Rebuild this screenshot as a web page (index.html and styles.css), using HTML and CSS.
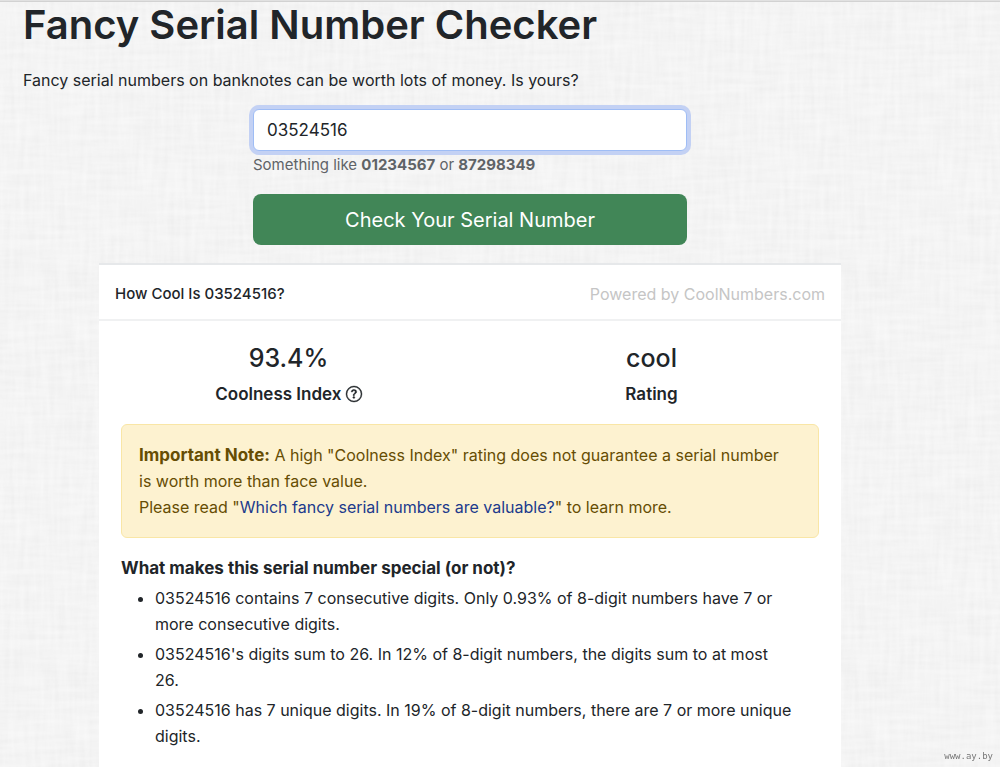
FILE: index.html
```html
<!DOCTYPE html>
<html lang="en">
  <head>
    <meta charset="utf-8">
    <meta name="viewport" content="width=device-width, initial-scale=1.0">
    <title>Fancy Serial Number Checker</title>
    <link rel="stylesheet" href="styles.css">
  </head>

  <body>
    <div class="topbar"></div>

    <main class="container">
      <h1>Fancy Serial Number Checker</h1>
      <p class="lead">Fancy serial numbers on banknotes can be worth lots of money. Is yours?</p>

      <form class="checker">
        <input class="serial" type="text" value="03524516" aria-label="Serial number" aria-describedby="serial-help">
        <div class="help" id="serial-help">Something like <b>01234567</b> or <b>87298349</b></div>
        <button class="submit" type="button">Check Your Serial Number</button>
      </form>

      <section class="card">
        <header class="card-header">
          <h2>How Cool Is 03524516?</h2>
          <a class="powered" href="#">Powered by CoolNumbers.com</a>
        </header>

        <div class="card-body">
          <div class="stats">
            <div class="stat">
              <div class="value">93.4%</div>
              <div class="label">Coolness Index
                <svg class="icon" viewBox="0 0 16 16" fill="currentColor" stroke="currentColor" stroke-width=".4" aria-hidden="true">
                  <path d="M8 15A7 7 0 1 1 8 1a7 7 0 0 1 0 14m0 1A8 8 0 1 0 8 0a8 8 0 0 0 0 16"/>
                  <path d="M5.255 5.786a.237.237 0 0 0 .241.247h.825c.138 0 .248-.113.266-.25.09-.656.54-1.134 1.342-1.134.686 0 1.314.343 1.314 1.168 0 .635-.374.927-.965 1.371-.673.489-1.206 1.06-1.168 1.987l.003.217a.25.25 0 0 0 .25.246h.811a.25.25 0 0 0 .25-.25v-.105c0-.718.273-.927 1.01-1.486.609-.463 1.244-.977 1.244-2.056 0-1.511-1.276-2.241-2.673-2.241-1.267 0-2.655.59-2.75 2.286m1.557 5.763c0 .533.425.927 1.01.927.609 0 1.028-.394 1.028-.927 0-.552-.42-.94-1.029-.94-.584 0-1.009.388-1.009.94"/>
                </svg>
              </div>
            </div>
            <div class="stat">
              <div class="value">cool</div>
              <div class="label">Rating</div>
            </div>
          </div>

          <div class="note">
            <b>Important Note:</b> A high "Coolness Index" rating does not guarantee a serial number is worth more than face value.<br>
            Please read "<a href="#">Which fancy serial numbers are valuable?</a>" to learn more.
          </div>

          <h3>What makes this serial number special (or not)?</h3>
          <ul class="facts">
            <li>03524516 contains 7 consecutive digits. Only 0.93% of 8-digit numbers have 7 or more consecutive digits.</li>
            <li>03524516's digits sum to 26. In 12% of 8-digit numbers, the digits sum to at most 26.</li>
            <li>03524516 has 7 unique digits. In 19% of 8-digit numbers, there are 7 or more unique digits.</li>
          </ul>
        </div>
      </section>
    </main>

    <div class="watermark">www.ay.by</div>
  </body>
</html>
```
FILE: styles.css
```css
* {
  box-sizing: border-box;
}

/* linen texture: one noise layer stretched along each axis */
body {
  margin: 0;
  font-family: Inter, "Liberation Sans", sans-serif;
  font-size: 16px;
  line-height: 26px;
  color: #212529;
  background-color: #efefef;
  background-image:
    url("data:image/svg+xml,%3Csvg xmlns='http://www.w3.org/2000/svg' width='400' height='400'%3E%3Cfilter id='n' x='0' y='0' width='100%25' height='100%25'%3E%3CfeTurbulence type='fractalNoise' baseFrequency='.02 .2' numOctaves='2' stitchTiles='stitch'/%3E%3CfeColorMatrix values='0 0 0 0 1 0 0 0 0 1 0 0 0 0 1 .6 0 0 0 -.14'/%3E%3C/filter%3E%3Crect width='400' height='400' filter='url(%23n)'/%3E%3C/svg%3E"),
    url("data:image/svg+xml,%3Csvg xmlns='http://www.w3.org/2000/svg' width='400' height='400'%3E%3Cfilter id='n' x='0' y='0' width='100%25' height='100%25'%3E%3CfeTurbulence type='fractalNoise' baseFrequency='.2 .02' numOctaves='2' stitchTiles='stitch'/%3E%3CfeColorMatrix values='0 0 0 0 1 0 0 0 0 1 0 0 0 0 1 .6 0 0 0 -.14'/%3E%3C/filter%3E%3Crect width='400' height='400' filter='url(%23n)'/%3E%3C/svg%3E");
}

.topbar {
  height: 2px;
  background: #e1e1e1;
  border-bottom: 1px solid #d2d2d2;
}

.container {
  max-width: 940px;
  padding: 0 23px;
}

h1, h2, h3, p {
  margin: 0;
}

h1 {
  font-size: 40px;
  line-height: 46px;
  font-weight: 600;
}

.lead {
  margin: 19px 0 16px;
}

.checker {
  display: flex;
  flex-direction: column;
  max-width: 434px;
  margin: 0 auto;
}

.serial {
  width: 100%;
  height: 42px;
  padding: 0 13px;
  font: inherit;
  font-size: 17px;
  color: inherit;
  background: #fff;
  border: 1px solid #9fbdf5;
  border-radius: 6px;
  outline: none;
  box-shadow: 0 0 0 4px #c3d1f4;
}

.help {
  margin: 3px 0 18px;
  font-size: 15px;
  line-height: 22px;
  color: #5f6367;
}

b {
  font-weight: 700;
}

.submit {
  height: 51px;
  font: inherit;
  font-size: 20px;
  color: #fff;
  background: #418657;
  border: 0;
  border-radius: 8px;
}

.card {
  max-width: 742px;
  margin: 18px auto 0;
  background: #fff;
  border-top: 2px solid #e6e8ea;
}

.card-header {
  display: flex;
  justify-content: space-between;
  align-items: center;
  height: 56px;
  padding: 4px 16px 0;
  border-bottom: 2px solid #f0f1f2;
}

h2 {
  font-size: 15px;
  font-weight: 500;
}

.powered {
  color: #c5c5c5;
  text-decoration: none;
}

.card-body {
  padding: 22px 22px 18px;
}

.stats {
  display: flex;
  margin: 0 -14px 17px;
}

.stat {
  flex: 1;
  text-align: center;
}

.value {
  margin-bottom: 8px;
  font-size: 25px;
  line-height: 30px;
  font-weight: 500;
}

.label {
  font-size: 17px;
  font-weight: 600;
}

.icon {
  width: 16px;
  height: 16px;
  vertical-align: -2px;
  overflow: visible;
}

.note {
  margin-bottom: 17px;
  padding: 17px 34px 17px 17px;
  color: #664d03;
  background: #fdf2d0;
  border: 1px solid #f9e6a6;
  border-radius: 6px;
}

.note b {
  font-size: 17px;
  line-height: 1;
}

.note a {
  color: #203a8c;
  text-decoration: none;
}

h3 {
  font-size: 17px;
  font-weight: 700;
}

.facts {
  margin: 4px 0 0;
  padding: 0 25px 0 34px;
}

.facts li {
  margin-bottom: 4px;
}

.watermark {
  position: fixed;
  right: 7px;
  bottom: 5px;
  font-family: "DejaVu Sans Mono", monospace;
  font-size: 9px;
  line-height: 12px;
  color: #777;
}
```
